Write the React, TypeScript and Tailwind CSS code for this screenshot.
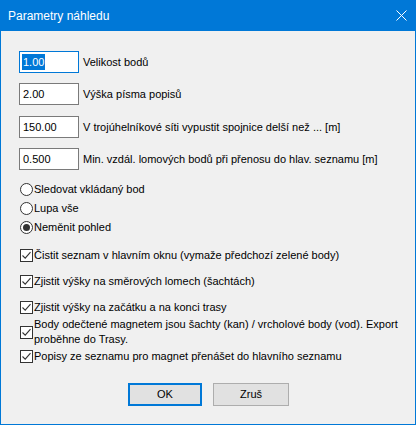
import React from "react";

const font = { fontFamily: '"Liberation Sans", Arial, sans-serif' };

function Field({ value, label, focused }: { value: string; label: string; focused?: boolean }) {
  return (
    <div className="flex items-center h-[22px]">
      <div
        className={
          focused
            ? "w-[60px] h-[22px] bg-white border border-[#0078d7] flex items-center pl-[2px]"
            : "w-[60px] h-[22px] bg-white border border-[#7a7a7a] flex items-center pl-[2px]"
        }
      >
        {focused ? (
          <span className="bg-[#0078d7] text-white leading-[16px] px-[1px]">{value}</span>
        ) : (
          <span className="leading-[16px] px-[1px]">{value}</span>
        )}
      </div>
      <span className="ml-[4px] whitespace-nowrap">{label}</span>
    </div>
  );
}

function Radio({ label, checked }: { label: string; checked?: boolean }) {
  return (
    <div className="flex items-center h-[19px]">
      <div className="w-[13px] h-[13px] rounded-full border border-[#333333] bg-white flex items-center justify-center">
        {checked && <div className="w-[7px] h-[7px] rounded-full bg-[#333333]" />}
      </div>
      <span className="ml-[1px]">{label}</span>
    </div>
  );
}

function Check({ children }: { children: React.ReactNode }) {
  return (
    <div className="flex items-center">
      <div className="w-[13px] h-[13px] shrink-0 border border-[#333333] bg-white flex items-center justify-center">
        <svg width="11" height="11" viewBox="0 0 11 11">
          <path d="M1.5 5.5 L4.2 8.2 L9.5 2.2" fill="none" stroke="#333333" strokeWidth="1.1" />
        </svg>
      </div>
      <div className="ml-[1px] leading-[15px] whitespace-nowrap">{children}</div>
    </div>
  );
}

export default function App() {
  return (
    <div
      className="w-[416px] h-[425px] bg-[#f0f0f0] border border-t-0 border-[#0078d7] flex flex-col text-[11px] text-black"
      style={font}
    >
      <div className="h-[31px] bg-[#0078d7] flex items-center justify-between pl-[8px] pr-[9px] -mx-[1px] text-white">
        <span className="text-[12px]">Parametry náhledu</span>
        <svg width="11" height="11" viewBox="0 0 11 11">
          <path d="M0.5 0.5 L10.5 10.5 M10.5 0.5 L0.5 10.5" stroke="white" strokeWidth="1" />
        </svg>
      </div>
      <div className="flex flex-col pl-[18px] pt-[20px]">
        <Field value="1.00" label="Velikost bodů" focused />
        <div className="h-[10px]" />
        <Field value="2.00" label="Výška písma popisů" />
        <div className="h-[11px]" />
        <Field value="150.00" label="V trojúhelníkové síti vypustit spojnice delší než ... [m]" />
        <div className="h-[10px]" />
        <Field value="0.500" label="Min. vzdál. lomových bodů při přenosu do hlav. seznamu [m]" />
        <div className="flex flex-col mt-[10px] pl-[1px]">
          <Radio label="Sledovat vkládaný bod" />
          <Radio label="Lupa vše" />
          <Radio label="Neměnit pohled" checked />
        </div>
        <div className="flex flex-col mt-[11px] pl-[1px] gap-[11px]">
          <Check>Čistit seznam v hlavním oknu (vymaže předchozí zelené body)</Check>
          <Check>Zjistit výšky na směrových lomech (šachtách)</Check>
          <Check>Zjistit výšky na začátku a na konci trasy</Check>
        </div>
        <div className="flex flex-col mt-[2px] pl-[1px] gap-[2px]">
          <Check>
            Body odečtené magnetem jsou šachty (kan) / vrcholové body (vod). Export
            <br />
            proběhne do Trasy.
          </Check>
          <Check>Popisy ze seznamu pro magnet přenášet do hlavního seznamu</Check>
        </div>
        <div className="flex mt-[19px] ml-[109px] gap-[11px]">
          <div className="w-[74px] h-[23px] border-2 border-[#0078d7] bg-[#e1e1e1] flex items-center justify-center">
            OK
          </div>
          <div className="w-[76px] h-[23px] border border-[#adadad] bg-[#e1e1e1] flex items-center justify-center">
            Zruš
          </div>
        </div>
      </div>
    </div>
  );
}
